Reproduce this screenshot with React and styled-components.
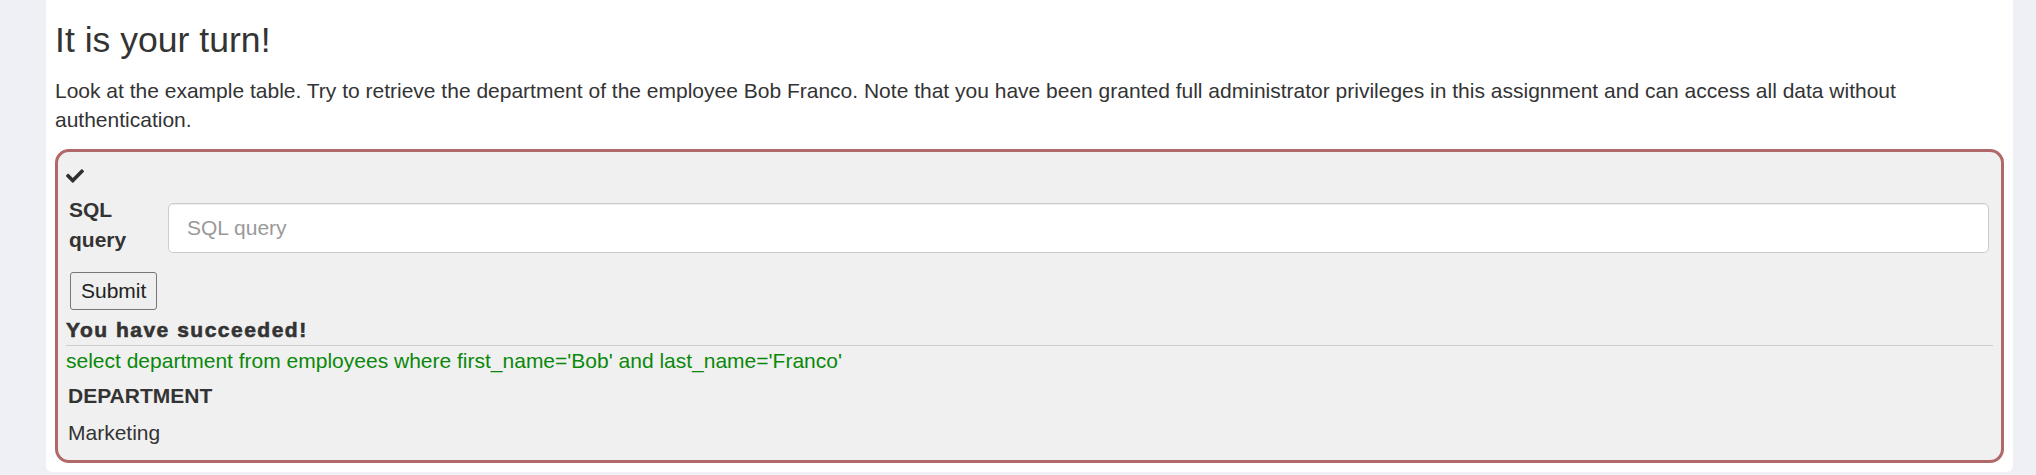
import React from 'react'
import styled, { createGlobalStyle } from 'styled-components'
import { FaCheck } from 'react-icons/fa'

const GlobalStyle = createGlobalStyle`
  html, body {
    margin: 0;
    padding: 0;
    background: #eff0f5;
  }
  body {
    font-family: "Liberation Sans", Arial, sans-serif;
    font-size: 21px;
    line-height: 29.7px;
    color: #333;
  }
`;

const Page = styled.div`
  padding: 0 23px 3px 46px;
`;

const Panel = styled.div`
  background: #fff;
  border-radius: 0 0 6px 6px;
  padding: 21px 9px 9px 9px;
`;

const Heading = styled.h3`
  margin: 0 0 16px;
  font-size: 35.6px;
  font-weight: 400;
  line-height: 38.5px;
  color: #333;
`;

const Intro = styled.p`
  margin: 0 0 14px;
`;

const AttackBox = styled.div`
  border: 3px solid #b06868;
  border-radius: 14px;
  background: #f0f0f0;
  padding: 15px 8px 6px 8px;
`;

const CheckRow = styled.div`
  height: 18px;
  margin-bottom: 10px;
  svg {
    display: block;
    width: 18px;
    height: 18px;
    color: #2f2f2f;
  }
`;

const FormRow = styled.div`
  display: flex;
  align-items: flex-start;
  padding-left: 3px;
  margin-right: 4px;
`;

const Label = styled.label`
  width: 70px;
  margin-right: 29px;
  font-weight: 700;
`;

const QueryInput = styled.input`
  flex: 1;
  height: 50px;
  margin-top: 8px;
  box-sizing: border-box;
  border: 1px solid #ccc;
  border-radius: 5px;
  background: #fff;
  padding: 0 18px;
  font-family: inherit;
  font-size: 21px;
  color: #555;
  box-shadow: inset 0 1px 1px rgba(0, 0, 0, 0.075);
  outline: none;
  &::placeholder {
    color: #999;
  }
`;

const SubmitButton = styled.button`
  display: block;
  margin: 18px 0 5px 4px;
  height: 38px;
  padding: 0 10px;
  border: 1px solid #767676;
  border-radius: 3px;
  background: #efefef;
  font-family: inherit;
  font-size: 21px;
  color: #222;
`;

const Success = styled.div`
  font-weight: 700;
  letter-spacing: 1.5px;
  -webkit-text-stroke: 0.6px #333;
  color: #333;
`;

const Rule = styled.hr`
  margin: 0;
  border: 0;
  border-top: 1px solid #ccc;
`;

const QueryEcho = styled.div`
  color: #0a880a;
`;

const ResultTable = styled.table`
  border-collapse: collapse;
  font-size: 21px;
  line-height: 29.7px;
  color: #333;
`;

const HeadCell = styled.th`
  text-align: left;
  font-weight: 700;
  padding: 5px 2px 4px;
`;

const Cell = styled.td`
  padding: 4px 2px 6px;
`;

export default function App() {
  return (
    <Page>
      <GlobalStyle />
      <Panel>
        <Heading>It is your turn!</Heading>
        <Intro>
          Look at the example table. Try to retrieve the department of the employee Bob Franco. Note that you
          have been granted full administrator privileges in this assignment and can access all data without
          authentication.
        </Intro>
        <AttackBox>
          <CheckRow>
            <FaCheck />
          </CheckRow>
          <FormRow>
            <Label htmlFor="query">SQL query</Label>
            <QueryInput id="query" placeholder="SQL query" />
          </FormRow>
          <SubmitButton>Submit</SubmitButton>
          <Success>You have succeeded!</Success>
          <Rule />
          <QueryEcho>select department from employees where first_name='Bob' and last_name='Franco'</QueryEcho>
          <ResultTable>
            <thead>
              <tr>
                <HeadCell>DEPARTMENT</HeadCell>
              </tr>
            </thead>
            <tbody>
              <tr>
                <Cell>Marketing</Cell>
              </tr>
            </tbody>
          </ResultTable>
        </AttackBox>
      </Panel>
    </Page>
  )
}
